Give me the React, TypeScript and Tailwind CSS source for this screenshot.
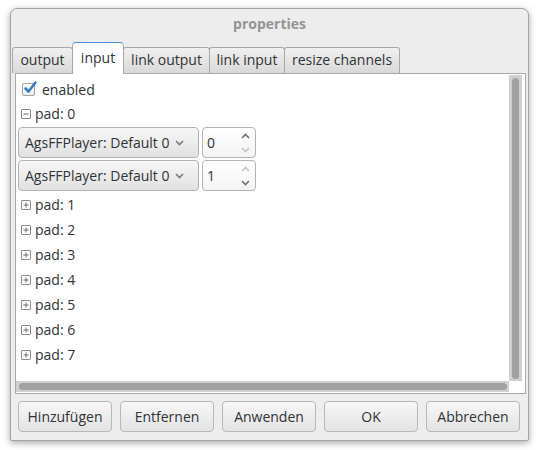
import React from "react";

const font = { fontFamily: '"Open Sans", "Noto Sans", sans-serif' };

function Tab({ label, w, active }: { label: string; w: string; active?: boolean }) {
  if (active) {
    return (
      <div
        className={`${w} -ml-px relative z-10 h-[32px] -mb-px flex items-center justify-center bg-white border border-[#a8a8a8] border-b-0 border-t-[#4a90d9] rounded-t-[4px] text-[14px] text-[#2e3436] pb-[3px]`}
      >
        {label}
      </div>
    );
  }
  return (
    <div
      className={`${w} -ml-px first:ml-0 h-[26px] flex items-center justify-center bg-gradient-to-b from-[#f0f0f0] to-[#d9d9d9] border border-[#a8a8a8] border-b-0 rounded-t-[3px] text-[14px] text-[#2e3436] pb-[2px]`}
    >
      {label}
    </div>
  );
}

function Expander({ open }: { open?: boolean }) {
  return (
    <svg width="10" height="10" viewBox="0 0 10 10" className="shrink-0">
      <rect x="0.5" y="0.5" width="9" height="9" fill="#fff" stroke="#8c8c8c" rx="0.5" />
      <line x1="2.5" y1="5" x2="7.5" y2="5" stroke="#6a6a6a" />
      {!open && <line x1="5" y1="2.5" x2="5" y2="7.5" stroke="#6a6a6a" />}
    </svg>
  );
}

function PadRow({ n, open }: { n: number; open?: boolean }) {
  return (
    <div className="h-[25px] flex items-center pl-[5px] gap-[4px] text-[14px] text-[#2e3436] pb-[2px]">
      <Expander open={open} />
      <span>pad: {n}</span>
    </div>
  );
}

function Chevron({ up, color }: { up?: boolean; color: string }) {
  return (
    <svg width="9" height="6" viewBox="0 0 9 6">
      <path
        d={up ? "M1 5 L4.5 1.5 L8 5" : "M1 1 L4.5 4.5 L8 1"}
        fill="none"
        stroke={color}
        strokeWidth="1.6"
      />
    </svg>
  );
}

function ComboRow({ value, upDark }: { value: string; upDark: boolean }) {
  return (
    <div className="flex items-center gap-[3px] pl-[2px] h-[33px] pb-[2px]">
      <div className="w-[181px] h-[31px] flex items-center justify-between pl-[6px] pr-[14px] rounded-[4px] border border-[#b3b3b3] bg-gradient-to-b from-[#f7f7f7] to-[#e1e1e1] text-[14px] text-[#2e3436]">
        <span>AgsFFPlayer: Default 0</span>
        <Chevron color="#7a7a7a" />
      </div>
      <div className="w-[54px] h-[31px] flex items-center justify-between pl-[4px] pr-[5px] rounded-[4px] border border-[#b3b3b3] bg-gradient-to-b from-[#ffffff] to-[#f4f4f4] text-[14px] text-[#2e3436]">
        <span>{value}</span>
        <div className="flex flex-col gap-[8px]">
          <Chevron up color={upDark ? "#6e6e6e" : "#c4c4c4"} />
          <Chevron color={upDark ? "#c4c4c4" : "#6e6e6e"} />
        </div>
      </div>
    </div>
  );
}

function Button({ label }: { label: string }) {
  return (
    <div className="w-[94px] h-[31px] flex items-center justify-center rounded-[4px] border border-[#b7b7b7] bg-gradient-to-b from-[#f7f7f7] to-[#e3e3e3] text-[14px] text-[#2e3436]">
      {label}
    </div>
  );
}

export default function App() {
  return (
    <div className="w-[538px] h-[450px] bg-white pt-[8px] pl-[10px]" style={font}>
      <div className="w-[519px] h-[433px] flex flex-col bg-[#ededed] border border-[#a4a4a4] rounded-t-[7px] rounded-b-[2px] shadow-[0_2px_7px_rgba(0,0,0,0.35)]">
        <div className="h-[33px] flex items-center justify-center text-[14px] font-bold text-[#949494] pb-[4px]">
          properties
        </div>
        <div className="flex items-end pl-[1px] h-[31px]">
          <Tab label="output" w="w-[61px]" />
          <Tab label="input" w="w-[52px]" active />
          <Tab label="link output" w="w-[87px]" />
          <Tab label="link input" w="w-[76px]" />
          <Tab label="resize channels" w="w-[116px]" />
        </div>
        <div className="ml-[4px] w-[511px] h-[321px] border border-[#a8a8a8] bg-white flex flex-col pt-[1px] pr-[3px] pb-[1px]">
          <div className="flex flex-1 min-h-0">
            <div className="flex-1 flex flex-col pt-[2px]">
              <div className="h-[25px] flex items-center pl-[6px] gap-[7px] text-[14px] text-[#2e3436] pb-[1px]">
                <div className="relative w-[13px] h-[13px] rounded-[2px] border border-[#a3a3a3] bg-gradient-to-b from-white to-[#ececec]">
                  <svg width="15" height="15" viewBox="0 0 15 15" className="absolute -top-[4px] left-[0px]">
                    <path d="M2.5 8.5 L5.5 11.5 L12.5 2.5" fill="none" stroke="#3a7ad0" strokeWidth="2.6" strokeLinecap="round" strokeLinejoin="round" />
                  </svg>
                </div>
                <span>enabled</span>
              </div>
              <PadRow n={0} open />
              <ComboRow value="0" upDark={true} />
              <ComboRow value="1" upDark={false} />
              {[1, 2, 3, 4, 5, 6, 7].map((n) => (
                <PadRow key={n} n={n} />
              ))}
            </div>
            <div className="w-[13px] bg-[#d0d0d0] flex justify-center pt-[3px] pb-[2px]">
              <div className="w-[7px] h-full rounded-full bg-[#a1a1a1]" />
            </div>
          </div>
          <div className="h-[11px] flex">
            <div className="flex-1 bg-[#d0d0d0] flex items-center pl-[3px] pr-[2px]">
              <div className="h-[7px] w-full rounded-full bg-[#a1a1a1]" />
            </div>
            <div className="w-[13px] bg-white" />
          </div>
        </div>
        <div className="flex gap-[8px] pl-[7px] pt-[7px]">
          <Button label="Hinzufügen" />
          <Button label="Entfernen" />
          <Button label="Anwenden" />
          <Button label="OK" />
          <Button label="Abbrechen" />
        </div>
      </div>
    </div>
  );
}
